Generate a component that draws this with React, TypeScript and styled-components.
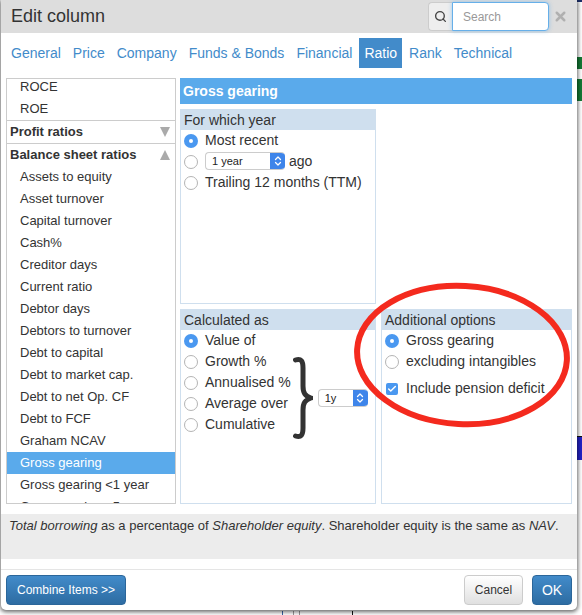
import React from "react";
import styled, { createGlobalStyle } from "styled-components";
import { Search, X, ChevronsUpDown, Check } from "lucide-react";

const GlobalStyle = createGlobalStyle`
  html, body {
    margin: 0;
    padding: 0;
    background: #fff;
  }
  body {
    width: 582px;
    height: 615px;
    overflow: hidden;
    font-family: "Liberation Sans", Arial, sans-serif;
    color: #333;
  }
`;

const Page = styled.div`
  position: relative;
  width: 582px;
  height: 615px;
  display: flex;
  align-items: flex-start;
  overflow: hidden;
`;

const Dialog = styled.div`
  width: 576px;
  height: 610px;
  margin-left: 1px;
  background: #fff;
  border-radius: 0 0 5px 5px;
  box-shadow: 0 1px 4px 1px rgba(0, 0, 0, 0.6);
  display: flex;
  flex-direction: column;
  position: relative;
  z-index: 1;
`;

const Header = styled.div`
  height: 33px;
  flex: none;
  background: #ddd;
  display: flex;
  align-items: center;
  padding: 0 9px 0 10px;
`;

const Title = styled.div`
  flex: 1;
  font-size: 18px;
  color: #333;
`;

const SearchAddon = styled.div`
  width: 24px;
  height: 29px;
  box-sizing: border-box;
  background: #eee;
  border: 1px solid #ccc;
  border-right: none;
  border-radius: 4px 0 0 4px;
  display: flex;
  align-items: center;
  justify-content: center;
  color: #444;
`;

const SearchInput = styled.div`
  width: 97px;
  height: 29px;
  box-sizing: border-box;
  background: #fff;
  border: 1px solid #66afe9;
  border-radius: 0 4px 4px 0;
  box-shadow: 0 0 4px rgba(102, 175, 233, 0.6);
  color: #999;
  font-size: 12px;
  padding-left: 10px;
  display: flex;
  align-items: center;
`;

const CloseIcon = styled(X)`
  margin-left: 4px;
  color: #b0b0b0;
`;

const Tabs = styled.div`
  height: 30px;
  flex: none;
  margin-top: 5px;
  padding-left: 5px;
  display: flex;
`;

const Tab = styled.div<{ $active?: boolean }>`
  padding: 0 5px;
  display: flex;
  align-items: center;
  margin-right: 2px;
  font-size: 14px;
  color: ${(p) => (p.$active ? "#fff" : "#428bca")};
  background: ${(p) => (p.$active ? "#428bca" : "transparent")};
`;

const Body = styled.div`
  height: 426px;
  flex: none;
  margin-top: 10px;
  padding: 0 5px;
  display: flex;
  gap: 4px;
`;

const List = styled.div`
  width: 170px;
  flex: none;
  box-sizing: border-box;
  border: 1px solid #ccc;
  overflow: hidden;
  font-size: 13px;
`;

const ListScroll = styled.div`
  margin-top: -3px;
`;

const ListItem = styled.div<{ $selected?: boolean }>`
  height: 22px;
  line-height: 22px;
  padding-left: 13px;
  white-space: nowrap;
  color: ${(p) => (p.$selected ? "#fff" : "#333")};
  background: ${(p) => (p.$selected ? "#5aaaeb" : "transparent")};
`;

const ListGroup = styled.div`
  height: 23px;
  line-height: 22px;
  box-sizing: border-box;
  border-top: 1px solid #ccc;
  padding: 0 5px 0 3px;
  display: flex;
  justify-content: space-between;
  align-items: center;
  font-weight: bold;
  color: #333;
`;

const Triangle = styled.span<{ $up?: boolean }>`
  width: 0;
  height: 0;
  border-left: 5px solid transparent;
  border-right: 5px solid transparent;
  ${(p) => (p.$up ? "border-bottom" : "border-top")}: 10px solid #aaa;
`;

const Details = styled.div`
  flex: 1;
  display: flex;
  flex-direction: column;
`;

const DetailsTitle = styled.div`
  height: 26px;
  flex: none;
  background: #5aaaeb;
  color: #fff;
  font-weight: bold;
  font-size: 14px;
  line-height: 26px;
  padding-left: 3px;
`;

const Panels = styled.div`
  flex: 1;
  margin-top: 5px;
  display: grid;
  grid-template-columns: 196px 191px;
  grid-template-rows: 195px 195px;
  column-gap: 5px;
  row-gap: 5px;
`;

const Panel = styled.div`
  box-sizing: border-box;
  border: 1px solid #cfdfee;
  border-top: none;
  font-size: 14px;
`;

const PanelTitle = styled.div`
  height: 21px;
  line-height: 22px;
  margin: 0 -1px;
  background: #cfdfee;
  color: #333;
  padding-left: 4px;
`;

const Options = styled.div`
  padding: 0 3px;
  margin-top: -1px;
`;

const Row = styled.div<{ $gapTop?: number }>`
  height: 21px;
  display: flex;
  align-items: center;
  gap: 7px;
  margin-top: ${(p) => p.$gapTop ?? 0}px;
  white-space: nowrap;
`;

const Radio = styled.span<{ $checked?: boolean }>`
  width: 14px;
  height: 14px;
  margin-top: 2px;
  flex: none;
  box-sizing: border-box;
  border-radius: 50%;
  border: ${(p) => (p.$checked ? "none" : "1px solid #b4b4b4")};
  background: ${(p) => (p.$checked ? "#4a98f0" : "#fff")};
  display: flex;
  align-items: center;
  justify-content: center;
  &::after {
    content: "";
    display: ${(p) => (p.$checked ? "block" : "none")};
    width: 4px;
    height: 4px;
    border-radius: 50%;
    background: #fff;
  }
`;

const CheckBox = styled.span`
  width: 12px;
  height: 12px;
  margin: 2px 1px 0;
  flex: none;
  border-radius: 2px;
  background: #4a98f0;
  color: #fff;
  display: flex;
  align-items: center;
  justify-content: center;
`;

const Select = styled.div<{ $width: number }>`
  width: ${(p) => p.$width}px;
  height: 18px;
  flex: none;
  box-sizing: border-box;
  border: 1px solid #ccc;
  border-right: none;
  border-radius: 4px;
  background: #fff;
  font-size: 11px;
  color: #222;
  display: flex;
  align-items: center;
  justify-content: space-between;
  padding-left: 6px;
  overflow: hidden;
`;

const SelectArrow = styled.span`
  width: 15px;
  height: 18px;
  background: #3e85ea;
  color: #fff;
  display: flex;
  align-items: center;
  justify-content: center;
`;

const AgoLabel = styled.span`
  margin-left: -3px;
`;

const CalcBody = styled.div`
  display: flex;
  align-items: flex-start;
`;

const BraceColumn = styled.div`
  margin-top: 26px;
  margin-left: -1px;
  display: flex;
  align-items: center;
  gap: 5px;
  height: 84px;
`;

const Description = styled.div`
  height: 45px;
  flex: none;
  margin-top: 10px;
  box-sizing: border-box;
  background: #ececec;
  font-size: 13px;
  padding: 3px 8px;
  line-height: 18px;
  color: #333;
  white-space: nowrap;
`;

const Footer = styled.div`
  flex: 1;
  margin-top: 10px;
  border-top: 1px solid #e5e5e5;
  padding: 5px;
  display: flex;
  align-items: flex-start;
  gap: 9px;
`;

const Button = styled.div<{ $primary?: boolean; $width: number }>`
  width: ${(p) => p.$width}px;
  height: 30px;
  box-sizing: border-box;
  border-radius: 4px;
  border: 1px solid ${(p) => (p.$primary ? "#2b669a" : "#ccc")};
  background: ${(p) =>
    p.$primary
      ? "linear-gradient(#428bca, #2d6ca2)"
      : "linear-gradient(#fff, #e0e0e0)"};
  color: ${(p) => (p.$primary ? "#fff" : "#333")};
  font-size: 12px;
  display: flex;
  align-items: center;
  justify-content: center;
`;

const Spacer = styled.div`
  flex: 1;
`;

const OkButton = styled(Button)`
  font-size: 14px;
`;

const PageEdge = styled.div`
  flex: 1;
  height: 615px;
  display: flex;
  flex-direction: column;
`;

const EdgeBlock = styled.div<{ $top: number; $height: number; $color: string }>`
  height: ${(p) => p.$height}px;
  flex: none;
  margin-top: ${(p) => p.$top}px;
  background: ${(p) => p.$color};
`;

const PageTick = styled.div<{ $left: number; $color: string }>`
  position: absolute;
  left: ${(p) => p.$left}px;
  bottom: 0;
  width: 1px;
  height: 4px;
  background: ${(p) => p.$color};
`;

const Annotation = styled.svg`
  position: absolute;
  left: 0;
  top: 0;
  z-index: 2;
  pointer-events: none;
`;

const metrics = [
  "Assets to equity",
  "Asset turnover",
  "Capital turnover",
  "Cash%",
  "Creditor days",
  "Current ratio",
  "Debtor days",
  "Debtors to turnover",
  "Debt to capital",
  "Debt to market cap.",
  "Debt to net Op. CF",
  "Debt to FCF",
  "Graham NCAV",
];

const tabs = ["General", "Price", "Company", "Funds & Bonds", "Financial", "Ratio", "Rank", "Technical"];

const calcOptions = ["Growth %", "Annualised %", "Average over", "Cumulative"];

export default function App() {
  return (
    <Page>
      <GlobalStyle />
      <Dialog>
        <Header>
          <Title>Edit column</Title>
          <SearchAddon>
            <Search size={13} strokeWidth={2.5} />
          </SearchAddon>
          <SearchInput>Search</SearchInput>
          <CloseIcon size={15} strokeWidth={4} />
        </Header>
        <Tabs>
          {tabs.map((t) => (
            <Tab key={t} $active={t === "Ratio"}>
              {t}
            </Tab>
          ))}
        </Tabs>
        <Body>
          <List>
            <ListScroll>
              <ListItem>ROCE</ListItem>
              <ListItem>ROE</ListItem>
              <ListGroup>
                Profit ratios <Triangle />
              </ListGroup>
              <ListGroup>
                Balance sheet ratios <Triangle $up />
              </ListGroup>
              {metrics.map((m) => (
                <ListItem key={m}>{m}</ListItem>
              ))}
              <ListItem $selected>Gross gearing</ListItem>
              <ListItem>Gross gearing &lt;1 year</ListItem>
              <ListItem>Gross gearing &lt;5 years</ListItem>
            </ListScroll>
          </List>
          <Details>
            <DetailsTitle>Gross gearing</DetailsTitle>
            <Panels>
              <Panel>
                <PanelTitle>For which year</PanelTitle>
                <Options>
                  <Row>
                    <Radio $checked />
                    Most recent
                  </Row>
                  <Row>
                    <Radio />
                    <Select $width={80}>
                      1 year
                      <SelectArrow>
                        <ChevronsUpDown size={12} strokeWidth={2.5} />
                      </SelectArrow>
                    </Select>
                    <AgoLabel>ago</AgoLabel>
                  </Row>
                  <Row>
                    <Radio />
                    Trailing 12 months (TTM)
                  </Row>
                </Options>
              </Panel>
              <div />
              <Panel>
                <PanelTitle>Calculated as</PanelTitle>
                <CalcBody>
                  <Options>
                    <Row>
                      <Radio $checked />
                      Value of
                    </Row>
                    {calcOptions.map((o) => (
                      <Row key={o}>
                        <Radio />
                        {o}
                      </Row>
                    ))}
                  </Options>
                  <BraceColumn>
                    <svg width="20" height="84" viewBox="0 0 20 84">
                      <path
                        d="M2.5 4 C8 2 10 5 10 12 L10 30 C10 37 12 40 18 42 C12 44 10 47 10 54 L10 72 C10 79 8 82 2.5 80"
                        fill="none"
                        stroke="#333"
                        strokeWidth="5"
                        strokeLinecap="round"
                      />
                    </svg>
                    <Select $width={50}>
                      1y
                      <SelectArrow>
                        <ChevronsUpDown size={12} strokeWidth={2.5} />
                      </SelectArrow>
                    </Select>
                  </BraceColumn>
                </CalcBody>
              </Panel>
              <Panel>
                <PanelTitle>Additional options</PanelTitle>
                <Options>
                  <Row>
                    <Radio $checked />
                    Gross gearing
                  </Row>
                  <Row>
                    <Radio />
                    excluding intangibles
                  </Row>
                  <Row $gapTop={6}>
                    <CheckBox>
                      <Check size={10} strokeWidth={3.5} />
                    </CheckBox>
                    Include pension deficit
                  </Row>
                </Options>
              </Panel>
            </Panels>
          </Details>
        </Body>
        <Description>
          <em>Total borrowing</em> as a percentage of <em>Shareholder equity</em>. Shareholder equity is the same as{" "}
          <em>NAV</em>.
        </Description>
        <Footer>
          <Button $primary $width={120}>
            Combine Items &gt;&gt;
          </Button>
          <Spacer />
          <Button $width={59}>Cancel</Button>
          <OkButton $primary $width={40}>
            OK
          </OkButton>
        </Footer>
      </Dialog>
      <PageEdge>
        <EdgeBlock $top={0} $height={2} $color="#1c2f6b" />
        <EdgeBlock $top={55} $height={12} $color="#147a35" />
        <EdgeBlock $top={10} $height={22} $color="#147a35" />
        <EdgeBlock $top={335} $height={1} $color="#111" />
        <EdgeBlock $top={0} $height={23} $color="#2222c8" />
      </PageEdge>
      <PageTick $left={282} $color="#3a64a8" />
      <PageTick $left={293} $color="#999" />
      <PageTick $left={299} $color="#999" />
      <PageTick $left={352} $color="#111" />
      <Annotation width="582" height="615" viewBox="0 0 582 615">
        <ellipse
          cx="462"
          cy="355"
          rx="105"
          ry="69"
          fill="none"
          stroke="#f42a1e"
          strokeWidth="6"
          transform="rotate(3 462 355)"
        />
      </Annotation>
    </Page>
  );
}
